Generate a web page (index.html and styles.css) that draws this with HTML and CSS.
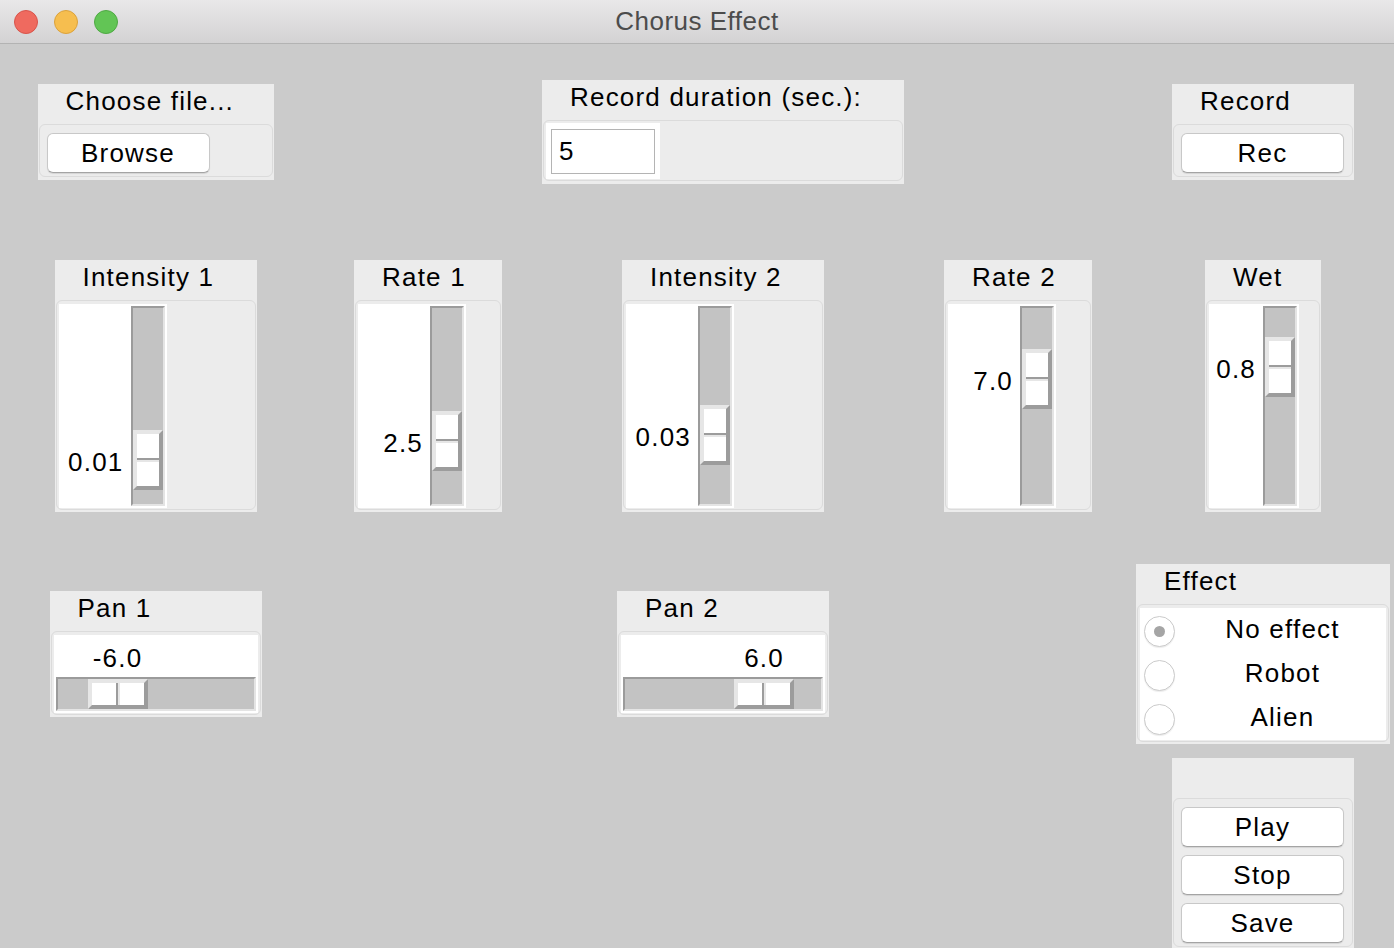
FILE: index.html
```html
<!DOCTYPE html>
<html lang="en">
<head>
<meta charset="utf-8">
<title>Chorus Effect</title>
<link rel="stylesheet" href="styles.css">
</head>
<body>
<div class="window">
  <header class="titlebar">
    <div class="lights">
      <span class="light light-close"></span>
      <span class="light light-min"></span>
      <span class="light light-max"></span>
    </div>
    <div class="title">Chorus Effect</div>
    <div></div>
  </header>

  <main class="content">
    <!-- Row 1 -->
    <section class="panel panel-choose r1 c1">
      <div class="panel-label">Choose file...</div>
      <div class="frame frame-buttons">
        <button class="btn">Browse</button>
      </div>
    </section>

    <section class="panel panel-duration r1 c3">
      <div class="panel-label">Record duration (sec.):</div>
      <div class="frame frame-entry">
        <div class="entry-wrap"><div class="entry">5</div></div>
      </div>
    </section>

    <section class="panel panel-record r1 c5">
      <div class="panel-label">Record</div>
      <div class="frame frame-buttons">
        <button class="btn">Rec</button>
      </div>
    </section>

    <!-- Row 2: vertical scales -->
    <section class="panel panel-wide r2 c1">
      <div class="panel-label">Intensity 1</div>
      <div class="frame frame-scale">
        <div class="vscale" style="--pos:122px">
          <span class="scale-value">0.01</span>
          <div class="vtrough"><div class="vthumb"></div></div>
        </div>
      </div>
    </section>

    <section class="panel panel-mid r2 c2">
      <div class="panel-label">Rate 1</div>
      <div class="frame frame-scale">
        <div class="vscale" style="--pos:103px">
          <span class="scale-value">2.5</span>
          <div class="vtrough"><div class="vthumb"></div></div>
        </div>
      </div>
    </section>

    <section class="panel panel-wide r2 c3">
      <div class="panel-label">Intensity 2</div>
      <div class="frame frame-scale">
        <div class="vscale" style="--pos:97px">
          <span class="scale-value">0.03</span>
          <div class="vtrough"><div class="vthumb"></div></div>
        </div>
      </div>
    </section>

    <section class="panel panel-mid r2 c4">
      <div class="panel-label">Rate 2</div>
      <div class="frame frame-scale">
        <div class="vscale" style="--pos:41px">
          <span class="scale-value">7.0</span>
          <div class="vtrough"><div class="vthumb"></div></div>
        </div>
      </div>
    </section>

    <section class="panel panel-narrow r2 c5">
      <div class="panel-label">Wet</div>
      <div class="frame frame-scale">
        <div class="vscale vscale-narrow" style="--pos:29px">
          <span class="scale-value">0.8</span>
          <div class="vtrough"><div class="vthumb"></div></div>
        </div>
      </div>
    </section>

    <!-- Row 3 -->
    <section class="panel panel-pan r3 c1">
      <div class="panel-label">Pan 1</div>
      <div class="frame frame-scale">
        <div class="hscale" style="--pos:30px">
          <span class="scale-value">-6.0</span>
          <div class="htrough"><div class="hthumb"></div></div>
        </div>
      </div>
    </section>

    <section class="panel panel-pan r3 c3">
      <div class="panel-label">Pan 2</div>
      <div class="frame frame-scale">
        <div class="hscale" style="--pos:109px">
          <span class="scale-value">6.0</span>
          <div class="htrough"><div class="hthumb"></div></div>
        </div>
      </div>
    </section>

    <section class="panel panel-effect r3 c5">
      <div class="panel-label">Effect</div>
      <div class="frame frame-scale">
        <div class="radios">
          <div class="radio-row"><span class="radio radio-on"></span><span class="radio-label">No effect</span></div>
          <div class="radio-row"><span class="radio"></span><span class="radio-label">Robot</span></div>
          <div class="radio-row"><span class="radio"></span><span class="radio-label">Alien</span></div>
        </div>
      </div>
    </section>

    <!-- Row 4 -->
    <section class="panel panel-record r4 c5">
      <div class="panel-label"></div>
      <div class="frame frame-buttons frame-stack">
        <button class="btn">Play</button>
        <button class="btn">Stop</button>
        <button class="btn">Save</button>
      </div>
    </section>
  </main>
</div>
</body>
</html>
```

FILE: styles.css
```css
* {
  box-sizing: border-box;
}

html,
body {
  margin: 0;
  padding: 0;
}

body {
  width: 1394px;
  height: 948px;
  overflow: hidden;
  background: #cbcbcb;
  font-family: "Liberation Sans", Arial, Helvetica, sans-serif;
  color: #000;
}

.window {
  display: flex;
  flex-direction: column;
  height: 948px;
}

/* ---------- Title bar ---------- */
.titlebar {
  flex: none;
  height: 44px;
  display: grid;
  grid-template-columns: 1fr auto 1fr;
  align-items: center;
  background: linear-gradient(#e9e8e9, #d3d2d3);
  border-bottom: 1px solid #b3b3b3;
}

.lights {
  display: flex;
  gap: 16px;
  padding-left: 14px;
}

.light {
  width: 24px;
  height: 24px;
  border-radius: 50%;
}

.light-close {
  background: #ef6a5f;
  border: 1px solid #d8544b;
}

.light-min {
  background: #f6be4f;
  border: 1px solid #dba23c;
}

.light-max {
  background: #62c555;
  border: 1px solid #4fa944;
}

.title {
  font-size: 26px;
  line-height: 43px;
  letter-spacing: 0.5px;
  color: #4c4c4c;
  white-space: nowrap;
}

/* ---------- Content grid ---------- */
.content {
  display: grid;
  grid-template-columns: 311px 234px 356px 234px 256px;
  grid-template-rows: 176px 332px 204px auto;
  justify-items: center;
  align-items: center;
}

.r1 { grid-row: 1; }
.r2 { grid-row: 2; }
.r3 { grid-row: 3; }
.r4 {
  grid-row: 4;
  align-self: start;
  margin-top: 2px;
}

.c1 { grid-column: 1; }
.c2 { grid-column: 2; }
.c3 { grid-column: 3; }
.c4 { grid-column: 4; }
.c5 { grid-column: 5; }

/* ---------- Panels ---------- */
.panel {
  background: #ececec;
  display: flex;
  flex-direction: column;
}

.panel-choose { width: 236px; }
.panel-duration { width: 362px; margin: 0 -3px; }
.panel-record { width: 182px; }
.panel-wide { width: 202px; }
.panel-mid { width: 148px; }
.panel-narrow { width: 116px; }
.panel-pan { width: 212px; }
.panel-effect { width: 254px; }

.panel-label {
  flex: none;
  height: 40px;
  line-height: 34px;
  padding-left: 28px;
  font-size: 26px;
  letter-spacing: 1.2px;
  white-space: nowrap;
}

.frame {
  margin: 0 1px 2px;
  border: 1px solid #dbdbdb;
  border-radius: 6px;
}

.frame-buttons {
  padding: 8px 7px 3px;
  margin-bottom: 3px;
}

.frame-stack {
  display: flex;
  flex-direction: column;
  gap: 8px;
}

.frame-entry {
  padding: 2px 2px 1px;
  margin-bottom: 3px;
}

.frame-scale {
  padding: 3px 2px 1px;
}

/* ---------- Buttons ---------- */
.btn {
  display: block;
  width: 163px;
  height: 40px;
  padding: 0;
  background: #fff;
  border: 1px solid #c8c8c8;
  border-bottom-color: #a4a4a4;
  border-radius: 6px;
  box-shadow: 0 1px 1px rgba(0, 0, 0, 0.1);
  font-family: inherit;
  font-size: 26px;
  line-height: 38px;
  letter-spacing: 1.2px;
  color: #000;
  text-align: center;
}

/* ---------- Entry ---------- */
.entry-wrap {
  width: 114px;
  height: 56px;
  background: #fff;
  padding: 6px 5px 5px;
}

.entry {
  height: 45px;
  border: 1px solid #b4b4b4;
  padding-left: 7px;
  font-size: 26px;
  line-height: 43px;
  letter-spacing: 1.2px;
}

/* ---------- Scales ---------- */
.scale-value {
  position: absolute;
  font-size: 26px;
  line-height: 30px;
  letter-spacing: 1.2px;
  white-space: nowrap;
}

.vscale {
  position: relative;
  width: 108px;
  height: 204px;
  background: #fff;
  padding: 2px;
  display: flex;
  justify-content: flex-end;
}

.vscale-narrow {
  width: 90px;
}

.vscale .scale-value {
  right: 43px;
  top: calc(var(--pos) + 21px);
}

.vtrough {
  position: relative;
  width: 34px;
  height: 200px;
  border: 2px solid;
  border-color: #9b9b9b #e4e4e4 #e4e4e4 #9b9b9b;
  background: #c3c3c3;
}

.vthumb {
  position: absolute;
  left: 0;
  top: var(--pos);
  width: 30px;
  height: 60px;
  border: 4px solid;
  border-color: #e6e6e6 #9c9c9c #9c9c9c #e6e6e6;
  background: linear-gradient(to bottom, #fff 0 24px, #9c9c9c 24px 26px, #e6e6e6 26px 28px, #fff 28px 100%);
}

.hscale {
  position: relative;
  width: 204px;
  height: 78px;
  background: #fff;
  padding: 2px;
  display: flex;
  flex-direction: column;
  justify-content: flex-end;
}

.hscale .scale-value {
  top: 8px;
  left: calc(var(--pos) + 34px);
  transform: translateX(-50%);
}

.htrough {
  position: relative;
  height: 34px;
  border: 2px solid;
  border-color: #9b9b9b #e4e4e4 #e4e4e4 #9b9b9b;
  background: #c3c3c3;
}

.hthumb {
  position: absolute;
  top: 0;
  left: var(--pos);
  width: 60px;
  height: 30px;
  border: 4px solid;
  border-color: #e6e6e6 #9c9c9c #9c9c9c #e6e6e6;
  background: linear-gradient(to right, #fff 0 24px, #9c9c9c 24px 26px, #e6e6e6 26px 28px, #fff 28px 100%);
}

/* ---------- Radios ---------- */
.radios {
  background: #fff;
}

.radio-row {
  height: 44px;
  display: flex;
  align-items: center;
}

.radio {
  flex: none;
  width: 31px;
  height: 31px;
  margin-left: 4px;
  margin-top: 2px;
  border-radius: 50%;
  border: 1px solid #cbcbcb;
  background: #fff;
  box-shadow: 0 1px 1px rgba(0, 0, 0, 0.08);
  display: flex;
  align-items: center;
  justify-content: center;
}

.radio-on::after {
  content: "";
  width: 11px;
  height: 11px;
  border-radius: 50%;
  background: #a5a5a5;
}

.radio-label {
  flex: 1;
  padding-left: 4px;
  padding-bottom: 3px;
  text-align: center;
  font-size: 26px;
  line-height: 40px;
  letter-spacing: 1.2px;
  white-space: nowrap;
}
```
